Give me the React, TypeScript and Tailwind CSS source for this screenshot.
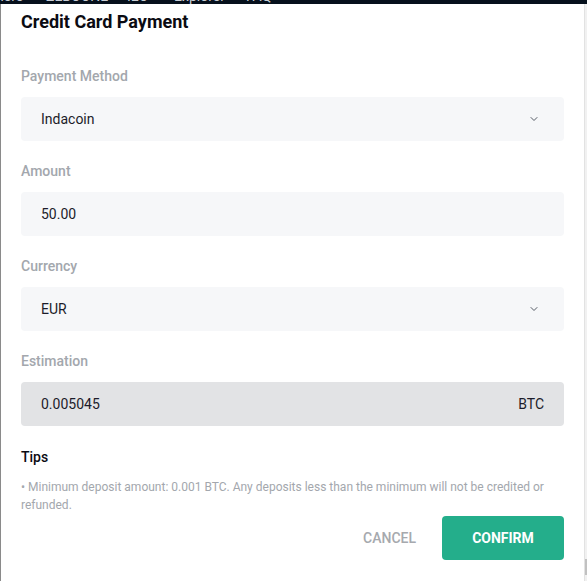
import { ChevronDown } from "lucide-react";

const fields = [
  { label: "Payment Method", value: "Indacoin", select: true },
  { label: "Amount", value: "50.00" },
  { label: "Currency", value: "EUR", select: true },
];

export default function App() {
  return (
    <div className="w-[587px] h-[581px] overflow-hidden bg-[#06101c] font-['Roboto',sans-serif] flex flex-col">
      {/* page nav peeking out from behind the modal */}
      <div className="h-1 overflow-hidden shrink-0">
        <div className="flex text-[14px] leading-4 text-[#c9ced6] -mt-3 -ml-1">
          <span className="w-[50px]">here</span>
          <span className="w-[81px]">ZEBOONE</span>
          <span className="w-[47px]">IEO</span>
          <span className="w-[72px]">Explorer</span>
          <span>FAQ</span>
        </div>
      </div>
      <div className="flex flex-1 min-h-0">
        <div className="flex-1 bg-white border-l border-[#8a8a8a] pl-5 pr-5 flex flex-col">
          <h2 className="text-[18px] leading-6 font-bold text-[#0b0b12] mt-[6px]">
            Credit Card Payment
          </h2>
          <div className="mt-[32px] flex flex-col gap-5">
            {fields.map((f) => (
              <div key={f.label}>
                <div className="text-[14px] leading-5 font-medium text-[#a3a7ad]">
                  {f.label}
                </div>
                <div className="mt-[11px] h-11 rounded bg-[#f6f7f9] flex items-center pl-5 pr-6 text-[14px] text-[#1c1c2a]">
                  <span className="flex-1">{f.value}</span>
                  {f.select && (
                    <ChevronDown className="w-3 h-3 text-[#555b66]" strokeWidth={2} />
                  )}
                </div>
              </div>
            ))}
            <div>
              <div className="text-[14px] leading-5 font-medium text-[#a3a7ad]">
                Estimation
              </div>
              <div className="mt-[11px] h-11 rounded bg-[#e2e3e5] flex items-center pl-5 pr-5 text-[14px] text-[#1c1c2a]">
                <span className="flex-1">0.005045</span>
                <span>BTC</span>
              </div>
            </div>
          </div>
          <div className="mt-[21px] text-[14px] leading-5 font-medium text-[#0b0b12]">Tips</div>
          <p className="mt-[11px] text-[12px] leading-[18px] text-[#a3a7ad] pr-3">
            • Minimum deposit amount: 0.001 BTC. Any deposits less than the minimum will not be
            credited or refunded.
          </p>
          <div className="mt-[2px] flex justify-end items-center gap-[26px]">
            <button className="text-[14px] font-medium text-[#a6a9ae]">CANCEL</button>
            <button className="w-[122px] h-11 rounded bg-[#24ae8b] text-white text-[14px] font-bold">
              CONFIRM
            </button>
          </div>
        </div>
        <div className="w-[3px] bg-[#f1f1f1] border-l border-[#e2e2e2] flex flex-col justify-end pb-[6px]">
          <div className="h-4 bg-[#c1c1c1]" />
        </div>
      </div>
    </div>
  );
}
